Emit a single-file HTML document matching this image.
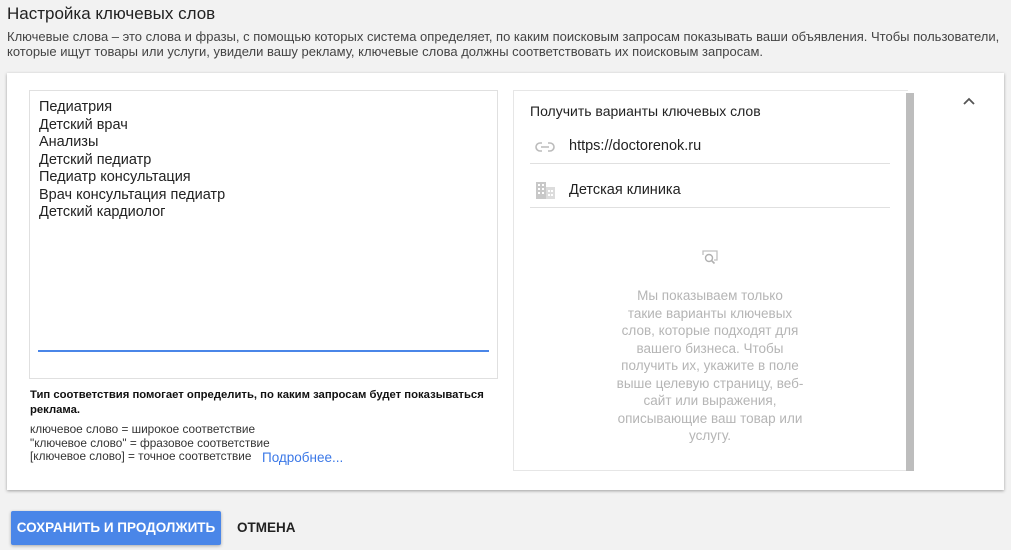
<!DOCTYPE html>
<html><head><meta charset="utf-8"><style>
*{margin:0;padding:0;box-sizing:border-box}
body{width:1011px;height:550px;background:#f2f2f2;font-family:"Liberation Sans",Arial,sans-serif;position:relative;overflow:hidden;color:#212121}
.a{position:absolute;white-space:nowrap}
</style></head><body>
<div class="a" style="left:7px;top:4px;font-size:17px;color:#222">Настройка ключевых слов</div>
<div class="a" style="left:7px;top:29px;font-size:13px;line-height:15px;color:#444">Ключевые слова – это слова и фразы, с помощью которых система определяет, по каким поисковым запросам показывать ваши объявления. Чтобы пользователи,<br>которые ищут товары или услуги, увидели вашу рекламу, ключевые слова должны соответствовать их поисковым запросам.</div>
<div class="a" style="left:7px;top:73px;width:997px;height:417px;background:#fff;box-shadow:0 1px 3px rgba(0,0,0,.35)"></div>
<div class="a" style="left:29px;top:90px;width:469px;height:289px;border:1px solid #e0e0e0;background:#fff"></div>
<div class="a" style="left:39px;top:99px;font-size:14.5px;line-height:17.5px;color:#222">Педиатрия<br>Детский врач<br>Анализы<br>Детский педиатр<br>Педиатр консультация<br>Врач консультация педиатр<br>Детский кардиолог</div>
<div class="a" style="left:38px;top:350px;width:451px;height:2px;background:#4a86e8"></div>
<div class="a" style="left:30px;top:388px;font-size:11.3px;line-height:15px;font-weight:bold;color:#111">Тип соответствия помогает определить, по каким запросам будет показываться<br>реклама.</div>
<div class="a" style="left:30px;top:423px;font-size:11.8px;line-height:13.5px;color:#333">ключевое слово = широкое соответствие<br>"ключевое слово" = фразовое соответствие<br>[ключевое слово] = точное соответствие</div>
<div class="a" style="left:262px;top:450px;font-size:13.5px;color:#3b78e7">Подробнее...</div>
<div class="a" style="left:513px;top:90px;width:395px;height:381px;border:1px solid #e6e6e6;border-right:none"></div>
<div class="a" style="left:906px;top:93px;width:8px;height:378px;background:#bdbdbd"></div>
<div class="a" style="left:530px;top:103px;font-size:14px;color:#222">Получить варианты ключевых слов</div>
<svg class="a" style="left:535px;top:140px" width="20" height="14" viewBox="0 0 20 14"><path d="M7 3H5a4 4 0 0 0 0 8h2M13 3h2a4 4 0 0 1 0 8h-2M6 7h8" fill="none" stroke="#bbb" stroke-width="1.6"/></svg>
<div class="a" style="left:569px;top:138px;font-size:14.5px;color:#222">https://doctorenok.ru</div>
<div class="a" style="left:530px;top:163px;width:360px;height:1px;background:#e0e0e0"></div>
<svg class="a" style="left:536px;top:182px" width="19" height="17" viewBox="0 0 19 17"><rect x="0" y="0" width="10" height="17" fill="#c8c8c8"/><rect x="10" y="5" width="9" height="12" fill="#dcdcdc"/><g fill="#fff"><rect x="2" y="2" width="2" height="2"/><rect x="6" y="2" width="2" height="2"/><rect x="2" y="6" width="2" height="2"/><rect x="6" y="6" width="2" height="2"/><rect x="2" y="10" width="2" height="2"/><rect x="6" y="10" width="2" height="2"/><rect x="12" y="8" width="2" height="2"/><rect x="15" y="8" width="2" height="2"/><rect x="12" y="12" width="2" height="2"/><rect x="15" y="12" width="2" height="2"/></g></svg>
<div class="a" style="left:569px;top:182px;font-size:14.5px;color:#222">Детская клиника</div>
<div class="a" style="left:530px;top:207px;width:360px;height:1px;background:#e0e0e0"></div>
<svg class="a" style="left:700px;top:249px" width="20" height="17" viewBox="0 0 20 17"><path d="M3 6V2h14v9h-3M3 6" fill="none" stroke="#c0c0c0" stroke-width="1.3"/><circle cx="9" cy="9" r="3.5" fill="none" stroke="#b0b0b0" stroke-width="1.4"/><path d="M11.5 11.5l3 3" stroke="#b0b0b0" stroke-width="1.6"/></svg>
<div class="a" style="left:590px;top:287px;width:240px;text-align:center;white-space:normal;font-size:13.5px;line-height:17.5px;color:#b5b5b5">Мы показываем только<br>такие варианты ключевых<br>слов, которые подходят для<br>вашего бизнеса. Чтобы<br>получить их, укажите в поле<br>выше целевую страницу, веб-<br>сайт или выражения,<br>описывающие ваш товар или<br>услугу.</div>
<svg class="a" style="left:962px;top:96px" width="14" height="10" viewBox="0 0 14 10"><path d="M2 8l5-5 5 5" fill="none" stroke="#555" stroke-width="1.8"/></svg>
<div class="a" style="left:11px;top:511px;width:210px;height:34px;background:#4a86e8;border-radius:2px;box-shadow:0 1px 3px rgba(0,0,0,.3);color:#fff;font-size:13.5px;font-weight:bold;line-height:34px;text-align:center">СОХРАНИТЬ И ПРОДОЛЖИТЬ</div>
<div class="a" style="left:237px;top:520px;font-size:13.5px;font-weight:bold;color:#222">ОТМЕНА</div>
</body></html>
